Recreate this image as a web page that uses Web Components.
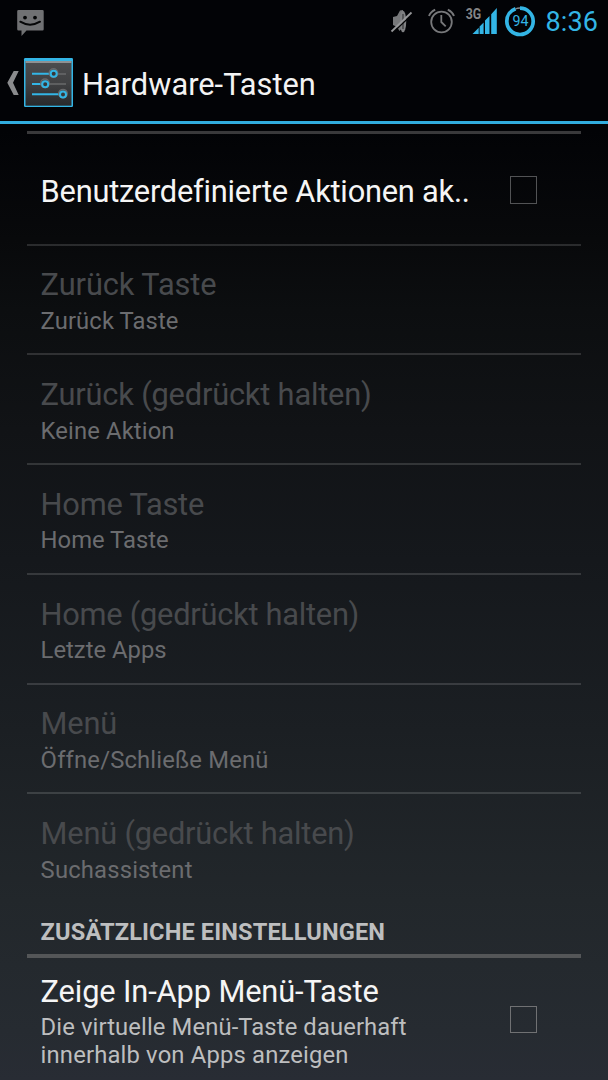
<!DOCTYPE html>
<html lang="de">
<head>
<meta charset="utf-8">
<title>Hardware-Tasten</title>
<style>
html,body{margin:0;height:1080px;overflow:hidden;background:#000}
body{font-family:Roboto,"Noto Sans",sans-serif}
</style>
</head>
<body>
<settings-screen></settings-screen>
<script>
const define = (name, html, setup) => customElements.define(name, class extends HTMLElement {
  connectedCallback() {
    if (this.shadowRoot) return;
    this.attachShadow({mode: 'open'}).innerHTML = html;
    if (setup) setup(this, this.shadowRoot);
  }
});

// A single line of text whose tracking is adjusted to a given width.
define('fit-text', `<style>:host{display:block;white-space:nowrap}span{display:inline-block}</style><span><slot></slot></span>`,
  (el, root) => {
    const w = +el.getAttribute('w'), s = root.querySelector('span');
    if (w) s.style.letterSpacing = (w - s.getBoundingClientRect().width) / el.textContent.length + 'px';
  });

define('status-bar', `<style>
:host{display:flex;align-items:center;height:43px;box-sizing:border-box;color:#33b5e5}
svg{display:block;flex:none}
.sp{flex:1}
.clock{font-size:27px;line-height:32px;margin-left:8.500px;margin-top:1px;width:54.500px}
</style>
<svg width="60" height="43" viewBox="0 0 60 43"><path d="M18.500 10H42.500Q43.700 10 43.700 11.200V29.300Q43.700 30.500 42.500 30.500H26.500L21.500 36V30.500H18.500Q17.200 30.500 17.200 29.300V11.200Q17.200 10 18.500 10Z" fill="#707173"/><circle cx="25" cy="17.600" r="1.900" fill="#050607"/><circle cx="35" cy="17.600" r="1.900" fill="#050607"/><path d="M20.300 21.700Q30 27.700 40 21.700" fill="none" stroke="#050607" stroke-width="2" stroke-linecap="round"/></svg>
<div class="sp"></div>
<svg width="157" height="43" viewBox="380 0 157 43">
<path d="M393 17L397 16 400 10.500 403 10V27L399.500 31 397 27 393 25Z" fill="#77787a"/><ellipse cx="403" cy="21.500" rx="3.200" ry="10.800" fill="#808183"/><path d="M403 14V29" stroke="#3d3e40" stroke-width="1.300"/>
<path d="M392.500 33L413 13.500" stroke="#050607" stroke-width="1.300"/><path d="M391.500 31.500L411.500 12.500" stroke="#97989a" stroke-width="1.800"/>
<g fill="none" stroke="#77787a"><circle cx="441.500" cy="22" r="10.300" stroke-width="1.800"/><path d="M441.300 15V22L445.700 26.300" stroke-width="1.800"/><path d="M429 16Q430.500 12 435.200 9.700M447.800 9.700Q452.500 12 454 16" stroke-width="1.900"/></g>
<text x="465.700" y="19" font-size="14" font-weight="700" fill="#858688" textLength="15.500" lengthAdjust="spacingAndGlyphs">3G</text>
<path d="M472.500 34L478.700 27.800V34ZM479.600 34V26.500L483.600 22.500V34ZM485 34V20.500L489.500 16V34ZM491.200 34V14.300L496.800 8V34Z" fill="#33b5e5"/>
<circle cx="520" cy="21.300" r="13.200" fill="none" stroke="#33b5e5" stroke-width="3.700" stroke-dasharray="77.900 5.100" transform="rotate(-90 520 21.300)"/><path d="M515.500 8.800Q517.500 8 520 8" fill="none" stroke="#858688" stroke-width="1.300"/>
<text x="512.400" y="26.400" font-size="15" fill="#33b5e5" textLength="16" lengthAdjust="spacingAndGlyphs">94</text>
</svg>
<fit-text class="clock" w="52.500">8:36</fit-text><div style="width:8px"></div>`);

define('action-bar', `<style>
:host{display:flex;align-items:center;height:81px;box-sizing:border-box;border-bottom:3px solid #31addf;color:#f3f3f3;font-size:30.800px;line-height:36px}
svg{display:block;flex:none;margin-right:9px}
fit-text{margin-top:5px}
</style>
<svg width="73" height="78" viewBox="0 43 73 78">
<path d="M13.700 71H18.700L13 82.700 18.700 95H13.700L7.300 82.700Z" fill="#8a8b8d"/>
<defs><linearGradient id="g" x2="0" y2="1"><stop stop-color="#4c4d4f"/><stop offset=".5" stop-color="#404143"/><stop offset="1" stop-color="#28292b"/></linearGradient></defs>
<rect x="24" y="58" width="49" height="49" rx="1.300" fill="#33b5e5"/><rect x="25.500" y="61" width="46" height="44.700" fill="url(#g)"/><rect x="25.500" y="61" width="46" height="2" fill="#8e9193"/>
<g stroke="#68696b" stroke-width="1.300"><path d="M58 74H66M49 84H66"/></g>
<g stroke="#33b5e5" stroke-width="1.900" fill="none"><path d="M32 73.700H50M32 84H41.500M32 94.300H59.500"/></g>
<g fill="none" stroke="#68696b" stroke-width="1.500"><circle cx="53.500" cy="73" r="4.200"/><circle cx="45" cy="83.300" r="4.200"/><circle cx="63" cy="93.600" r="4.200"/></g>
<g fill="#36383a" stroke="#33b5e5" stroke-width="2"><circle cx="53.700" cy="73.800" r="3"/><circle cx="45.200" cy="84.200" r="3"/><circle cx="63" cy="94.500" r="3"/></g>
</svg><fit-text w="233"><slot></slot></fit-text>`);

define('check-box', `<style>:host{display:block;box-sizing:border-box;width:27.500px;height:27.500px;border:1.500px solid var(--box,#525355)}</style>`);

define('pref-row', `<style>
:host{display:flex;box-sizing:border-box;height:109.750px;padding:21.900px 43.700px 0 13.600px;border-bottom:2px solid rgba(255,255,255,.14);color:#f5f5f5}
:host([disabled]){color:#484a4d}
.t{flex:1;min-width:0}
.title{font-size:30.800px;line-height:36px}
.sub{font-size:23.800px;line-height:28px;margin-top:3.500px;color:#bdbebf}
:host([disabled]) .sub{color:#6b6c6f}
</style><div class="t"><div class="title"><slot></slot></div><div class="sub"><slot name="sub"></slot></div></div><slot name="widget"></slot>`);

define('pref-header', `<style>
:host{display:block;box-sizing:border-box;height:55px;padding:15px 13.600px 0;border-bottom:4px solid #545658;color:#bdbebf;font-weight:700;font-size:23.600px;line-height:28px;margin-top:-1px}
</style><slot></slot>`);

define('settings-screen', `<style>
:host{display:flex;flex-direction:column;width:608px;height:1080px;overflow:hidden;background:linear-gradient(#020306 0,#020306 130px,#08090b 240px,#0c0e10 310px,#111316 430px,#15181c 560px,#1b1f23 730px,#22272b 900px,#262b31 1030px,#282c34 1080px)}
main{display:flex;flex-direction:column;margin:0 27px}
.rule{height:3px;background:#39393b;margin-top:7px}
.first{height:111.500px;padding-top:40px}
.first check-box{margin-top:2px}
.last{height:124px;padding-top:15.600px;border:0;--box:#707173}
.last fit-text[slot],.last div[slot]{margin-top:-.6px}
.last check-box{margin-top:32px}
</style>
<status-bar></status-bar>
<action-bar>Hardware-Tasten</action-bar>
<main>
<div class="rule"></div>
<pref-row class="first"><fit-text w="428">Benutzerdefinierte Aktionen ak..</fit-text><check-box slot="widget"></check-box></pref-row>
<pref-row disabled><fit-text w="176">Zurück Taste</fit-text><fit-text slot="sub" w="138">Zurück Taste</fit-text></pref-row>
<pref-row disabled><fit-text w="331">Zurück (gedrückt halten)</fit-text><fit-text slot="sub" w="134">Keine Aktion</fit-text></pref-row>
<pref-row disabled><fit-text w="163.500">Home Taste</fit-text><fit-text slot="sub" w="128">Home Taste</fit-text></pref-row>
<pref-row disabled><fit-text w="318.500">Home (gedrückt halten)</fit-text><fit-text slot="sub" w="126">Letzte Apps</fit-text></pref-row>
<pref-row disabled><fit-text w="76.500">Menü</fit-text><fit-text slot="sub" w="228">Öffne/Schließe Menü</fit-text></pref-row>
<pref-row disabled style="border-color:transparent"><fit-text w="314">Menü (gedrückt halten)</fit-text><fit-text slot="sub" w="152">Suchassistent</fit-text></pref-row>
<pref-header><fit-text w="344.500">ZUSÄTZLICHE EINSTELLUNGEN</fit-text></pref-header>
<pref-row class="last"><fit-text w="338">Zeige In-App Menü-Taste</fit-text><div slot="sub"><fit-text w="366">Die virtuelle Menü-Taste dauerhaft</fit-text><fit-text w="308">innerhalb von Apps anzeigen</fit-text></div><check-box slot="widget"></check-box></pref-row>
</main>`);
</script>
</body>
</html>
